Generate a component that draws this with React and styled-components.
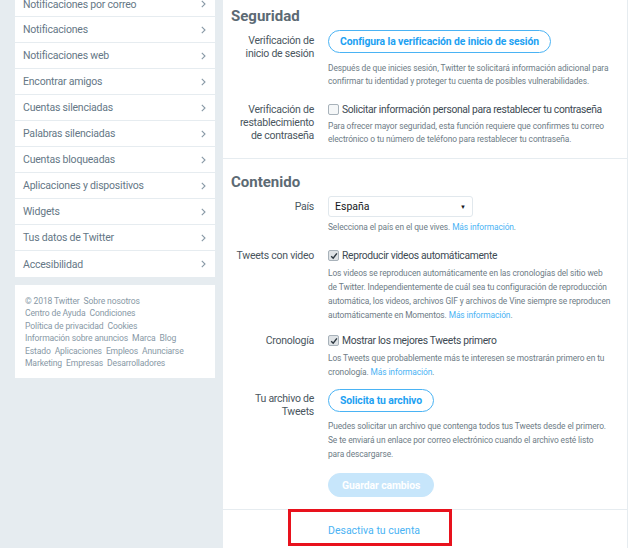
import React from "react";
import styled, { createGlobalStyle } from "styled-components";

const Global = createGlobalStyle`
  html, body { margin: 0; padding: 0; }
  body {
    background: #e6ecf0;
    font-family: Roboto, "Open Sans", sans-serif;
    overflow: hidden;
    width: 628px;
    height: 548px;
  }
`;

const Page = styled.div`
  display: grid;
  grid-template-columns: 200px 405px;
  column-gap: 7px;
  padding-left: 15px;
  height: 548px;
`;

const Side = styled.div`
  display: flex;
  flex-direction: column;
  gap: 8px;
  margin-top: -8px;
`;

const NavCard = styled.ul`
  list-style: none;
  margin: 0;
  padding: 0;
  background: #fff;
`;

const NavItem = styled.li`
  display: flex;
  align-items: center;
  justify-content: space-between;
  height: 25px;
  padding: 0 9px 0 8px;
  border-bottom: 1px solid #e6ecf0;
  font-size: 10.5px;
  letter-spacing: -0.2px;
  color: #657786;
  &:first-child { height: 24px; }
  &:last-child { border-bottom: none; height: 26px; }
`;

const Footer = styled.div`
  background: #fff;
  padding: 10px 8px 9px 10px;
  font-size: 8.6px;
  letter-spacing: -0.15px;
  line-height: 12.4px;
  color: #8899a6;
`;

const FootLine = styled.div`
  display: flex;
  gap: 4px;
  white-space: nowrap;
`;

const Main = styled.div`
  background: #fff;
  border-left: 1px solid #e6ecf0;
  margin-top: -7px;
`;

const Section = styled.section`
  padding: 13px 0 12px 8px;
  border-bottom: 1px solid #e6ecf0;
`;

const Heading = styled.h2`
  margin: 0 0 4px;
  font-size: 15px;
  font-weight: 700;
  color: #5c6a74;
  line-height: 20px;
`;

const Row = styled.div`
  display: grid;
  grid-template-columns: 83px 284px;
  column-gap: 14px;
  margin-top: ${(p) => p.$mt || 0}px;
`;

const Label = styled.div`
  text-align: right;
  font-size: 10.5px;
  letter-spacing: -0.25px;
  line-height: 13px;
  color: #4a5660;
  padding-top: ${(p) => p.$pt || 0}px;
`;

const Control = styled.div`
  display: flex;
  flex-direction: column;
  align-items: flex-start;
`;

const OutlineBtn = styled.button`
  height: 23px;
  padding: 0 11px;
  border: 1px solid #4ab3f4;
  border-radius: 100px;
  background: #fff;
  color: #1da1f2;
  font-family: inherit;
  font-weight: 700;
  font-size: 10.4px;
  letter-spacing: -0.1px;
  cursor: pointer;
`;

const FilledBtn = styled(OutlineBtn)`
  background: #c7e6fb;
  border-color: #c7e6fb;
  color: #fff;
  height: 24px;
  padding: 0 13px;
  margin-top: 12px;
`;

const Desc = styled.p`
  margin: ${(p) => p.$mt || 6}px 0 0;
  font-size: 8.4px;
  letter-spacing: -0.1px;
  line-height: ${(p) => p.$lh || 13}px;
  color: #6e7c86;
`;

const Link = styled.a`
  color: #4ab3f4;
  text-decoration: none;
`;

const Check = styled.label`
  display: flex;
  align-items: center;
  gap: 3px;
  font-size: 10.3px;
  letter-spacing: -0.32px;
  line-height: 13px;
  color: #3d4a53;
  white-space: nowrap;
`;

const Box = styled.span`
  width: 9px;
  height: 9px;
  border: 1px solid #a8b2ba;
  border-radius: 2px;
  background: ${(p) => (p.$on ? "#dfe3e6" : "#f5f7f8")};
  display: inline-flex;
  align-items: center;
  justify-content: center;
`;

const Select = styled.div`
  width: 145px;
  height: 21px;
  box-sizing: border-box;
  border: 1px solid #e1e8ed;
  border-radius: 3px;
  display: flex;
  align-items: center;
  justify-content: space-between;
  padding: 0 6px;
  font-size: 10.5px;
  color: #14171a;
`;

const Caret = styled.span`
  font-size: 6px;
  color: #14171a;
`;

const Deactivate = styled.div`
  position: relative;
  padding: 14px 0 0 105px;
  font-size: 10.5px;
  height: 30px;
`;

const Highlight = styled.div`
  position: absolute;
  left: 65px;
  top: -1px;
  width: 158px;
  height: 31px;
  border: 3px solid #e8121d;
  pointer-events: none;
`;

const Chevron = () => (
  <svg width="5" height="8" viewBox="0 0 5 8">
    <path d="M0.8 0.8 L4 4 L0.8 7.2" fill="none" stroke="#8899a6" strokeWidth="1.1" />
  </svg>
);

const Tick = () => (
  <svg width="8" height="8" viewBox="0 0 8 8">
    <path d="M1.2 4.2 L3.2 6.2 L6.9 1.3" fill="none" stroke="#2d3840" strokeWidth="1.4" />
  </svg>
);

const navItems = [
  "Notificaciones por correo",
  "Notificaciones",
  "Notificaciones web",
  "Encontrar amigos",
  "Cuentas silenciadas",
  "Palabras silenciadas",
  "Cuentas bloqueadas",
  "Aplicaciones y dispositivos",
  "Widgets",
  "Tus datos de Twitter",
  "Accesibilidad",
];

const footer = [
  ["© 2018 Twitter", "Sobre nosotros"],
  ["Centro de Ayuda", "Condiciones"],
  ["Política de privacidad", "Cookies"],
  ["Información sobre anuncios", "Marca", "Blog"],
  ["Estado", "Aplicaciones", "Empleos", "Anunciarse"],
  ["Marketing", "Empresas", "Desarrolladores"],
];

export default function App() {
  return (
    <>
      <Global />
      <Page>
        <Side>
          <NavCard>
            {navItems.map((n) => (
              <NavItem key={n}>
                <span>{n}</span>
                <Chevron />
              </NavItem>
            ))}
          </NavCard>
          <Footer>
            {footer.map((line, i) => (
              <FootLine key={i}>
                {line.map((t) => (
                  <span key={t}>{t}</span>
                ))}
              </FootLine>
            ))}
          </Footer>
        </Side>

        <Main>
          <Section>
            <Heading>Seguridad</Heading>
            <Row $mt={3}>
              <Label $pt={4}>Verificación de inicio de sesión</Label>
              <Control>
                <OutlineBtn>Configura la verificación de inicio de sesión</OutlineBtn>
                <Desc $mt={9}>
                  Después de que inicies sesión, Twitter te solicitará información adicional para
                  confirmar tu identidad y proteger tu cuenta de posibles vulnerabilidades.
                </Desc>
              </Control>
            </Row>
            <Row $mt={15}>
              <Label>Verificación de restablecimiento de contraseña</Label>
              <Control>
                <Check>
                  <Box />
                  Solicitar información personal para restablecer tu contraseña
                </Check>
                <Desc $mt={4}>
                  Para ofrecer mayor seguridad, esta función requiere que confirmes tu correo
                  electrónico o tu número de teléfono para restablecer tu contraseña.
                </Desc>
              </Control>
            </Row>
          </Section>

          <Section>
            <Heading>Contenido</Heading>
            <Row $mt={1}>
              <Label $pt={4}>País</Label>
              <Control>
                <Select>
                  <span>España</span>
                  <Caret>▼</Caret>
                </Select>
                <Desc $mt={4}>
                  Selecciona el país en el que vives. <Link>Más información</Link>.
                </Desc>
              </Control>
            </Row>
            <Row $mt={15}>
              <Label>Tweets con video</Label>
              <Control>
                <Check>
                  <Box $on>
                    <Tick />
                  </Box>
                  Reproducir videos automáticamente
                </Check>
                <Desc $mt={4} $lh={14}>
                  Los videos se reproducen automáticamente en las cronologías del sitio web de
                  Twitter. Independientemente de cuál sea tu configuración de reproducción
                  automática, los videos, archivos GIF y archivos de Vine siempre se reproducen
                  automáticamente en Momentos. <Link>Más información</Link>.
                </Desc>
              </Control>
            </Row>
            <Row $mt={12}>
              <Label>Cronología</Label>
              <Control>
                <Check>
                  <Box $on>
                    <Tick />
                  </Box>
                  Mostrar los mejores Tweets primero
                </Check>
                <Desc $mt={4} $lh={14}>
                  Los Tweets que probablemente más te interesen se mostrarán primero en tu
                  cronología. <Link>Más información</Link>.
                </Desc>
              </Control>
            </Row>
            <Row $mt={10}>
              <Label $pt={3}>Tu archivo de Tweets</Label>
              <Control>
                <OutlineBtn>Solicita tu archivo</OutlineBtn>
                <Desc $mt={7} $lh={14}>
                  Puedes solicitar un archivo que contenga todos tus Tweets desde el primero.
                  Se te enviará un enlace por correo electrónico cuando el archivo esté listo
                  <br />
                  para descargarse.
                </Desc>
                <FilledBtn>Guardar cambios</FilledBtn>
              </Control>
            </Row>
          </Section>

          <Deactivate>
            <Highlight />
            <Link>Desactiva tu cuenta</Link>
          </Deactivate>
        </Main>
      </Page>
    </>
  );
}
